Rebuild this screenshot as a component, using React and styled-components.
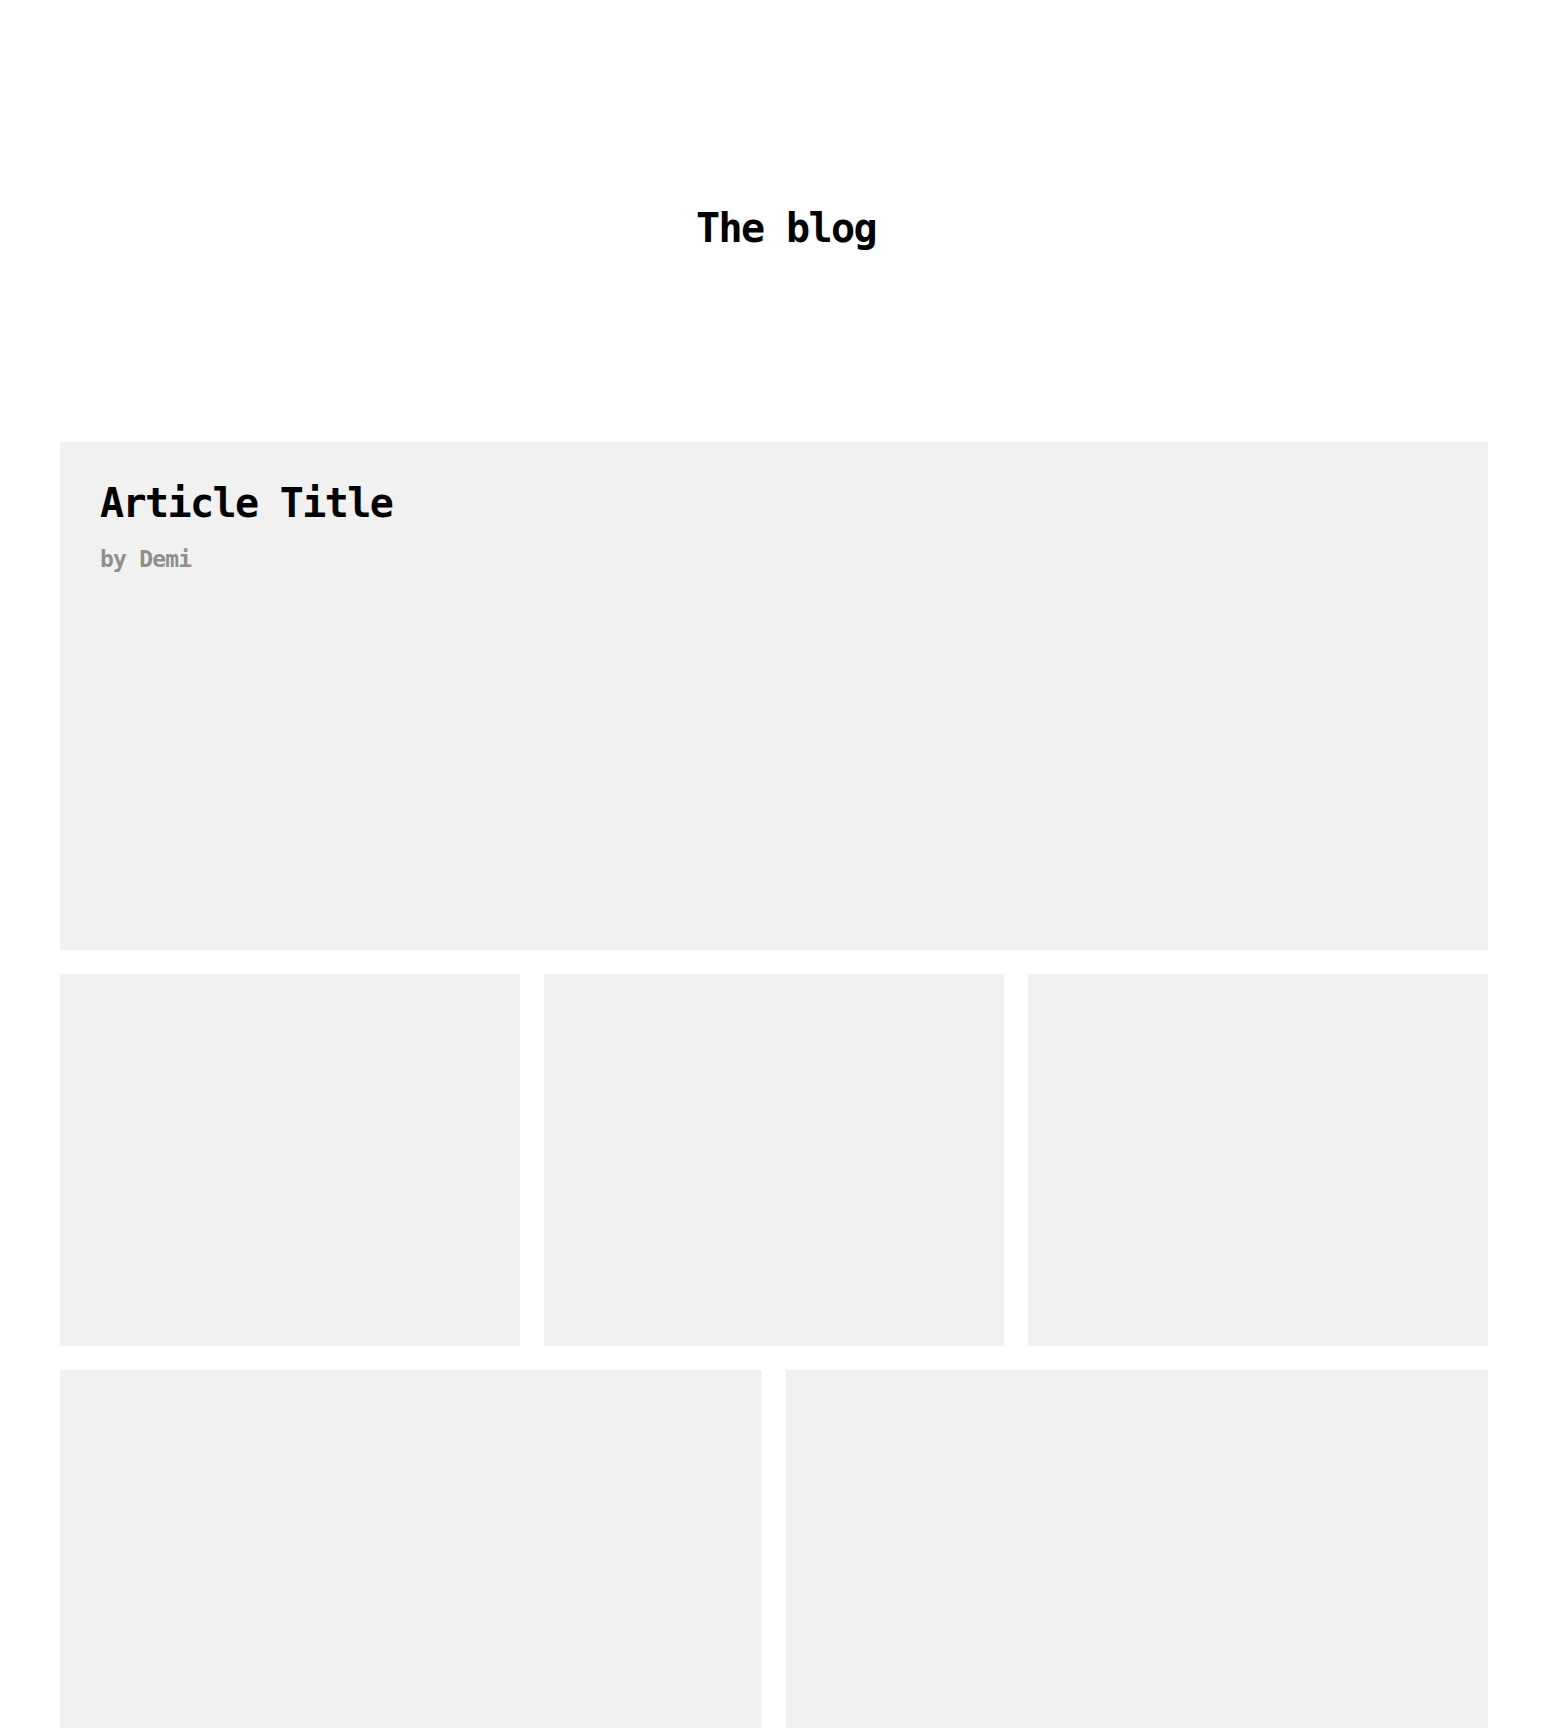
import React from "react";
import styled, { createGlobalStyle } from "styled-components";

const GlobalStyle = createGlobalStyle`
  body {
    margin: 0;
    background: #ffffff;
    font-family: "DejaVu Sans Mono", "Liberation Mono", monospace;
  }
`;

const articles = [
  { id: 1, title: "Article Title", author: "Demi", size: "wide" },
  { id: 2, size: "third" },
  { id: 3, size: "third" },
  { id: 4, size: "third" },
  { id: 5, size: "half" },
  { id: 6, size: "half" },
];

function App() {
  return (
    <>
      <GlobalStyle />
      <Page>
        <Header>
          <BlogTitle>The blog</BlogTitle>
        </Header>
        <Grid>
          {articles.map((article) => (
            <Card key={article.id} $size={article.size}>
              {article.title && <CardTitle>{article.title}</CardTitle>}
              {article.author && <Byline>by {article.author}</Byline>}
            </Card>
          ))}
        </Grid>
      </Page>
    </>
  );
}

const Page = styled.main`
  padding: 0 59px 0 60px;
`;

const Header = styled.header`
  display: flex;
  justify-content: center;
  padding: 208px 0 194px 24px;
`;

const BlogTitle = styled.h1`
  margin: 0;
  font-size: 40px;
  line-height: 1;
  font-weight: 700;
  letter-spacing: -1.6px;
  color: #000;
`;

const SPANS = {
  wide: "span 6",
  third: "span 2",
  half: "span 3",
};

const HEIGHTS = {
  wide: "508px",
  third: "372px",
  half: "500px",
};

const Grid = styled.section`
  display: grid;
  grid-template-columns: repeat(6, 1fr);
  gap: 24px;
`;

const Card = styled.article`
  grid-column: ${(p) => SPANS[p.$size]};
  height: ${(p) => HEIGHTS[p.$size]};
  box-sizing: border-box;
  background: #f1f1f1;
  padding: 41px 40px;
`;

const CardTitle = styled.h2`
  margin: 0;
  font-size: 40px;
  line-height: 1;
  font-weight: 700;
  letter-spacing: -1.6px;
  color: #000;
`;

const Byline = styled.p`
  margin: 25px 0 0;
  font-size: 23px;
  line-height: 1;
  font-weight: 700;
  letter-spacing: -0.8px;
  color: #8f8f8f;
`;

export default App;
